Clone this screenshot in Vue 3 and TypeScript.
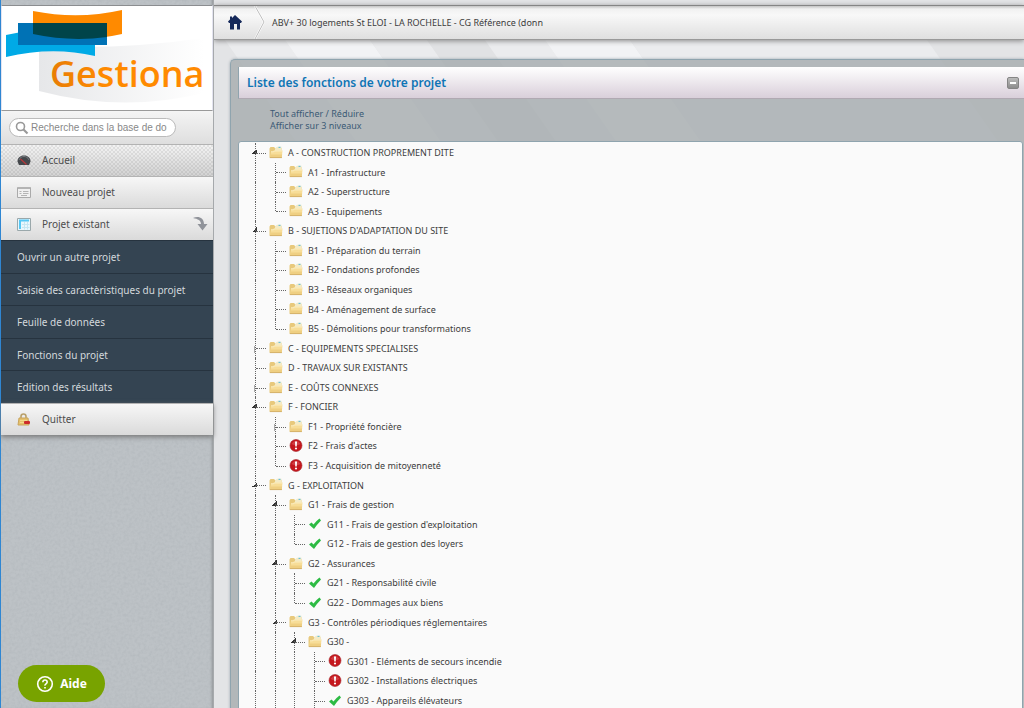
<script setup lang="ts">
import { ref } from 'vue'

type Icon = 'folder' | 'error' | 'ok'
type Toggle = 'open' | 'closed' | 'none'

interface Entry {
  level: number
  icon: Icon
  toggle: Toggle
  label: string
}

const entry = (level: number, label: string, icon: Icon = 'folder', toggle: Toggle = 'none'): Entry => ({
  level,
  label,
  icon,
  toggle,
})

const entries: Entry[] = [
  entry(0, 'A - CONSTRUCTION PROPREMENT DITE', 'folder', 'open'),
  entry(1, 'A1 - Infrastructure'),
  entry(1, 'A2 - Superstructure'),
  entry(1, 'A3 - Equipements'),
  entry(0, "B - SUJETIONS D'ADAPTATION DU SITE", 'folder', 'open'),
  entry(1, 'B1 - Préparation du terrain'),
  entry(1, 'B2 - Fondations profondes'),
  entry(1, 'B3 - Réseaux organiques'),
  entry(1, 'B4 - Aménagement de surface'),
  entry(1, 'B5 - Démolitions pour transformations'),
  entry(0, 'C - EQUIPEMENTS SPECIALISES', 'folder', 'closed'),
  entry(0, 'D - TRAVAUX SUR EXISTANTS'),
  entry(0, 'E - COÛTS CONNEXES', 'folder', 'closed'),
  entry(0, 'F - FONCIER', 'folder', 'open'),
  entry(1, 'F1 - Propriété foncière', 'folder', 'closed'),
  entry(1, "F2 - Frais d'actes", 'error'),
  entry(1, 'F3 - Acquisition de mitoyenneté', 'error'),
  entry(0, 'G - EXPLOITATION', 'folder', 'open'),
  entry(1, 'G1 - Frais de gestion', 'folder', 'open'),
  entry(2, "G11 - Frais de gestion d'exploitation", 'ok'),
  entry(2, 'G12 - Frais de gestion des loyers', 'ok'),
  entry(1, 'G2 - Assurances', 'folder', 'open'),
  entry(2, 'G21 - Responsabilité civile', 'ok'),
  entry(2, 'G22 - Dommages aux biens', 'ok'),
  entry(1, 'G3 - Contrôles périodiques réglementaires', 'folder', 'open'),
  entry(2, 'G30 -', 'folder', 'open'),
  entry(3, 'G301 - Eléments de secours incendie', 'error'),
  entry(3, 'G302 - Installations électriques', 'error'),
  entry(3, 'G303 - Appareils élévateurs', 'ok'),
]

// A guide line goes on below a row until its branch is closed; the last branch stays open.
const continues = (index: number, level: number): boolean => {
  const next = entries.slice(index + 1).find((e) => e.level <= level)
  return next === undefined || next.level === level
}

const submenu: string[] = [
  'Ouvrir un autre projet',
  'Saisie des caractèristiques du projet',
  'Feuille de données',
  'Fonctions du projet',
  'Edition des résultats',
]

const query = ref('')
const stripes: { x: number; w: number; fill: string }[] = [
  { x: 11, w: 60, fill: '#ebecee' },
  { x: 71, w: 85, fill: '#f2f3f5' },
  { x: 156, w: 57, fill: '#ebecee' },
  { x: 213, w: 58, fill: '#e1e2e4' },
  { x: 271, w: 60, fill: '#ebecee' },
  { x: 331, w: 85, fill: '#f2f3f5' },
  { x: 416, w: 297, fill: '#ebecee' },
]
</script>

<template>
  <div class="app">
    <aside class="side">
      <svg class="grain" width="100%" height="100%" aria-hidden="true">
        <filter id="grain">
          <feTurbulence type="fractalNoise" baseFrequency=".35" numOctaves="2" />
          <feColorMatrix values="0 0 0 0 .3  0 0 0 0 .33  0 0 0 0 .36  1 0 0 0 -.35" />
        </filter>
        <rect width="100%" height="100%" filter="url(#grain)" />
      </svg>
      <a class="logo" href="#" aria-label="Gestiona">
        <svg width="208" height="104" viewBox="0 0 208 104">
          <defs>
            <linearGradient id="plate" x1="0" x2="1" y1="0" y2="0">
              <stop offset="0" stop-color="#e6e7e9" />
              <stop offset="1" stop-color="#ffffff" />
            </linearGradient>
            <linearGradient id="ink" x1="0" x2="1" y1="0" y2="0">
              <stop offset="0" stop-color="#e87d05" />
              <stop offset=".35" stop-color="#ff8a00" />
            </linearGradient>
          </defs>
          <path d="M37 40Q120 44 202 32V87Q120 107 37 85Z" fill="url(#plate)" />
          <path d="M31 5Q76 14 120 4V28Q76 38 31 28Z" fill="#ff8a00" />
          <path d="M4 29Q50 19 93 29V50Q50 40 4 51Z" fill="#00aae6" />
          <path d="M16 17H105V39H16Z" fill="#0072b5" />
          <path d="M31 17H105V31Q68 36 31 28Z" fill="#00444a" />
          <text x="48" y="81" class="brand">Gestiona</text>
        </svg>
      </a>

      <form class="search" @submit.prevent>
        <label class="field">
          <svg width="14" height="14" viewBox="0 0 14 14" fill="none" stroke="#999">
            <circle cx="5.5" cy="5.5" r="4" stroke-width="1.6" />
            <path d="M8.5 8.5L12.5 12.5" stroke-width="2.2" />
          </svg>
          <input v-model="query" type="text" placeholder="Recherche dans la base de données" aria-label="Recherche" />
        </label>
      </form>

      <nav>
        <a class="item current" href="#">
          <svg width="14" height="14" viewBox="0 0 14 14">
            <path d="M.5 8.5C.5 5 3 2.500 7 2.500s6.500 2.500 6.500 6L12 12H2Z" fill="#44474b" />
            <path d="M2 7C3 4.500 5 3.500 7 3.500s4 1 5 3.500" fill="none" stroke="#777b80" />
            <path d="M3.500 6L9.500 11.500" stroke="#b8373a" stroke-width="1.200" />
          </svg>
          <span>Accueil</span>
        </a>
        <a class="item" href="#">
          <svg width="14" height="14" viewBox="0 0 14 14" fill="none">
            <path d="M.5 2.500H13.500V12.500H.5Z" fill="#f0f0f0" stroke="#aaa" />
            <path d="M1 3H13" stroke="#b4b4b4" stroke-width="2" />
            <path d="M2.500 6.500H4.500M6 6.500H11.500M2.500 8.500H4.500M6 8.500H11.500M4 10.500H10" stroke="#b4b4b4" />
          </svg>
          <span>Nouveau projet</span>
        </a>
        <a class="item" href="#">
          <svg width="14" height="14" viewBox="0 0 14 14" fill="none">
            <path d="M.5 1.500H13.500V13.500H.5Z" fill="#e9f7fd" stroke="#9aa8ab" />
            <path d="M2 3.500H12M3 3V12" stroke="#55c8f5" stroke-width="2" />
            <path d="M5 7.500H12.500M5 10.500H12.500M7.500 5V12.500M10.500 5V12.500" stroke="#c5e6f2" />
          </svg>
          <span class="grow">Projet existant</span>
          <svg width="16" height="16" viewBox="0 0 16 16">
            <path d="M1 2C6-.5 12 1.500 12 8H15.500L10.500 14.500L5.500 8H9C9 4.500 6 3 1 2Z" fill="#90939a" />
          </svg>
        </a>
        <div class="submenu">
          <a v-for="name in submenu" :key="name" href="#">{{ name }}</a>
        </div>
        <a class="item quit" href="#">
          <svg width="14" height="14" viewBox="0 0 14 14" fill="none">
            <path d="M4 7V4.500Q4 2 6.500 2T9 4.500V7" stroke="#b9a06b" stroke-width="1.600" />
            <path d="M2 6H11L12 13H1Z" fill="#e6c16b" stroke="#c9a45c" />
            <path d="M3 8.500H10M3 10.500H10" stroke="#f4d98c" />
            <rect x="7" y="9" width="6" height="3" rx="1" fill="#cc2b2b" />
          </svg>
          <span>Quitter</span>
        </a>
      </nav>

      <button class="help" type="button">
        <svg width="18" height="18" viewBox="0 0 18 18" fill="none" stroke="#fff" stroke-width="1.600">
          <circle cx="9" cy="9" r="7.300" />
          <path d="M6.800 7.200Q7 5 9 5T11.200 7Q11.200 8 10 8.800T9 10.600" />
          <path d="M9 12V13.600" />
        </svg>
        <span>Aide</span>
      </button>
    </aside>

    <main>
      <svg class="stripes" width="100%" height="100%" aria-hidden="true">
        <path v-for="s in stripes" :key="s.x" :d="`M${s.x} 40h${s.w}l700 1000h${-s.w}z`" :fill="s.fill" />
      </svg>

      <header class="crumbs">
        <a class="home" href="#" aria-label="Accueil">
          <svg width="14" height="15" viewBox="0 0 14 15">
            <path d="M7 0L14 6.500L13 8H12V14.500H9V9H6V14.500H2V8H1L0 6.500L2 4.500V1.500H4V3Z" fill="#15295a" />
          </svg>
        </a>
        <svg class="chevron" width="12" height="33" viewBox="0 0 12 33" fill="none">
          <path d="M1 0L10 16L1 33" stroke="#fff" stroke-width="2" />
          <path d="M1 0L10 16L1 33" stroke="#bdbdbd" />
        </svg>
        <span>ABV+ 30 logements St ELOI - LA ROCHELLE - CG Référence (donn</span>
      </header>

      <section class="panel">
        <div class="title">
          <h1>Liste des fonctions de votre projet</h1>
          <button type="button" class="fold" aria-label="Réduire"></button>
        </div>
        <div class="tools">
          <div><a href="#">Tout afficher</a> / <a href="#">Réduire</a></div>
          <div><a href="#">Afficher sur 3 niveaux</a></div>
        </div>
        <ul class="tree">
          <li v-for="(e, i) in entries" :key="e.label">
            <i v-for="l in e.level" :key="l" class="guide" :class="{ line: continues(i, l - 1) }"></i>
            <i class="guide branch" :class="[e.toggle, continues(i, e.level) ? 'line' : 'end']"></i>
            <svg v-if="e.icon === 'folder'" width="14" height="14" viewBox="0 0 14 14">
              <path d="M.5 2.500L1.500 1H5L6 2H12.500V11.500H.5Z" fill="#e8c97c" />
              <path d="M6 2.500L8 .8H12.500V5H6Z" fill="#f3ebc8" />
              <path d="M9.500 .8H11.500V2H9.500Z" fill="#6cc0d8" />
              <path d="M4.500 4.500H13.500L12.800 11.500H1.200L2 5.500H4Z" fill="#f7dd98" />
              <path d="M1.500 8.500H13.100L12.800 11.500H1Z" fill="#efcf82" />
              <path d="M2 5.800H4.500L5 5H13.300" fill="none" stroke="#fdf2cd" stroke-width=".8" />
              <path d="M.8 11.600H12.900" stroke="#cba65c" stroke-width=".8" />
            </svg>
            <svg v-else-if="e.icon === 'error'" width="14" height="14" viewBox="0 0 14 14">
              <circle cx="7" cy="6.500" r="6" fill="#c4161c" stroke="#a5272b" stroke-width=".6" />
              <path d="M2.500 5Q7-1.500 11.500 5Q7 7.500 2.500 5Z" fill="#d9575b" opacity=".6" />
              <path d="M6 2.500H8L7.700 7.500H6.300Z" fill="#fff" />
              <circle cx="7" cy="9.500" r="1.100" fill="#fff" />
            </svg>
            <svg v-else width="14" height="14" viewBox="0 0 14 14">
              <path d="M1 7.500L3.500 5.500L5.500 7.500Q8 4 11.500 1.500L13 3.500Q9 7.500 6 12Z" fill="#2dbb44" />
            </svg>
            <a href="#">{{ e.label }}</a>
          </li>
        </ul>
      </section>
    </main>
  </div>
</template>

<style>
body {
  background: #e3e4e6;
  overflow: hidden;
}
</style>

<style scoped>
.app {
  display: flex;
  height: 100vh;
  font-family: 'Noto Sans', 'Open Sans', sans-serif;
  color: #3c3c3c;
}
a {
  color: inherit;
  text-decoration: none;
}
.side {
  position: relative;
  box-sizing: border-box;
  flex: 0 0 214px;
  padding-top: 5px;
  border-left: 1px solid #2f86d2;
  border-right: 1px solid #a6a9ac;
  background: #bdc2c6;
  box-shadow: inset -3px 0 3px -2px #8d9194;
}
.grain {
  position: absolute;
  inset: 0;
  opacity: 0.35;
}
.logo {
  position: relative;
  display: block;
  border: 1px solid #e4e4f0;
  border-top-color: #8b8d90;
  border-bottom: 1px solid #999;
  background: #fff;
}
.logo svg {
  display: block;
}
.brand {
  font: 600 36px 'Open Sans', sans-serif;
  fill: url(#ink);
}
.search {
  position: relative;
  padding: 7px 8px;
  background: linear-gradient(#f4f4f4, #dedede);
}
nav {
  position: relative;
}
.field {
  display: flex;
  align-items: center;
  gap: 2px;
  box-sizing: border-box;
  width: 167px;
  height: 19px;
  padding: 0 8px 0 5px;
  border: 1px solid #bbb;
  border-radius: 10px;
  background: #fff;
}
.field input {
  flex: 1;
  min-width: 0;
  padding: 0;
  border: 0;
  outline: 0;
  background: none;
  font: 10px 'Liberation Sans', Arial, sans-serif;
}
.field input::placeholder {
  color: #888;
}
.item {
  display: flex;
  align-items: center;
  box-sizing: border-box;
  height: 32px;
  padding: 0 5px 2px 16px;
  border-top: 1px solid #b3b3b3;
  background: linear-gradient(#f7f7f7, #dadada);
  font-size: 10px;
  line-height: 14px;
  color: #4c4c4c;
}
.item span {
  margin-left: 11px;
}
.item .grow {
  flex: 1;
}
.current {
  background:
    repeating-conic-gradient(rgba(0, 0, 0, 0.07) 0 25%, transparent 0 50%) 0 0 / 4px 4px,
    linear-gradient(#f3f3f3, #d2d2d2);
}
.submenu {
  background: #344452;
}
.submenu a {
  display: flex;
  align-items: center;
  box-sizing: border-box;
  height: 33px;
  padding-left: 16px;
  border-top: 1px solid #26333f;
  font-size: 10px;
  color: #d3d8dc;
}
.submenu a:nth-child(even) {
  height: 32px;
}
.quit {
  box-shadow: 0 2px 5px #777;
}
.help {
  position: absolute;
  left: 17px;
  bottom: 6px;
  display: flex;
  align-items: center;
  justify-content: center;
  gap: 6px;
  width: 87px;
  height: 37px;
  border: 0;
  border-radius: 19px;
  background: #78a300;
  color: #fff;
  font: 700 12px 'Noto Sans', sans-serif;
}
main {
  position: relative;
  display: flex;
  flex-direction: column;
  flex: 1;
  min-width: 0;
  padding-top: 5px;
  overflow: hidden;
}
.stripes {
  position: absolute;
  inset: 0;
}
.crumbs {
  position: relative;
  display: flex;
  align-items: center;
  box-sizing: border-box;
  flex: 0 0 35px;
  border-top: 1px solid #858585;
  border-bottom: 1px solid #999;
  background: linear-gradient(#c4c4c4, #f1f1f1 3px, #f8f8f8 9px, #dfdfdf);
  box-shadow: 0 1px 5px #888;
  font-size: 9px;
}
.home {
  display: flex;
  padding: 0 12px 0 14px;
}
.chevron {
  margin-right: 6px;
}
.panel {
  position: relative;
  display: flex;
  flex-direction: column;
  flex: 1;
  margin: 19px 0 0 16px;
  padding: 7px 0 0 7px;
  border: 1px solid #8fa4ae;
  border-right: 0;
  border-bottom: 0;
  border-radius: 5px 0 0 0;
  background: rgba(165, 171, 174, 0.8);
  box-shadow: 0 0 3px #9aa5ac;
}
.title {
  display: flex;
  align-items: center;
  justify-content: space-between;
  box-sizing: border-box;
  height: 32px;
  padding: 0 5px 0 8px;
  border-left: 1px solid #8fa4ae;
  border-bottom: 1px solid #b0a9b2;
  background: linear-gradient(#fff, #d9cfda);
}
.title h1 {
  margin: 0;
  font-size: 12px;
  font-weight: 600;
  color: #0f75b5;
}
.fold {
  width: 12px;
  height: 12px;
  padding: 0;
  border: 1px solid #858585;
  border-radius: 2px;
  background: linear-gradient(#fff, #fff) center / 6px 2px no-repeat, linear-gradient(#bbb, #8d8d8d);
}
.tools {
  box-sizing: border-box;
  height: 42px;
  padding: 9px 32px 0;
  font-size: 9px;
  line-height: 12px;
  color: #3b5a75;
}
.tree {
  flex: 1;
  margin: 0 1px 0 0;
  padding: 1px 0 0 10px;
  border: 1px solid #8fa4ae;
  border-radius: 3px 3px 0 0;
  background: #fafafa;
  list-style: none;
  font-size: 9px;
  line-height: 2.174;
}
.tree li {
  display: flex;
  align-items: center;
  white-space: nowrap;
}
.tree li > a {
  margin-left: 5px;
}
.guide {
  position: relative;
  flex: none;
  align-self: stretch;
  width: 20px;
}
.guide:nth-child(even):not(.branch) {
  width: 19px;
}
.guide.line::before,
.guide.end::before {
  content: '';
  position: absolute;
  top: 0;
  bottom: 0;
  left: 6px;
  border-left: 1px dotted #666;
}
.guide.end::before {
  bottom: 50%;
}
.branch::after {
  content: '';
  position: absolute;
  top: 50%;
  left: 7px;
  width: 10px;
  border-top: 1px dotted #666;
}
.open {
  background: linear-gradient(135deg, transparent 50%, #333 50%) 3px 6px / 5px 5px no-repeat;
}
.closed {
  background: linear-gradient(#aaa, #aaa) 5px 7px / 1px 7px no-repeat;
}
</style>
